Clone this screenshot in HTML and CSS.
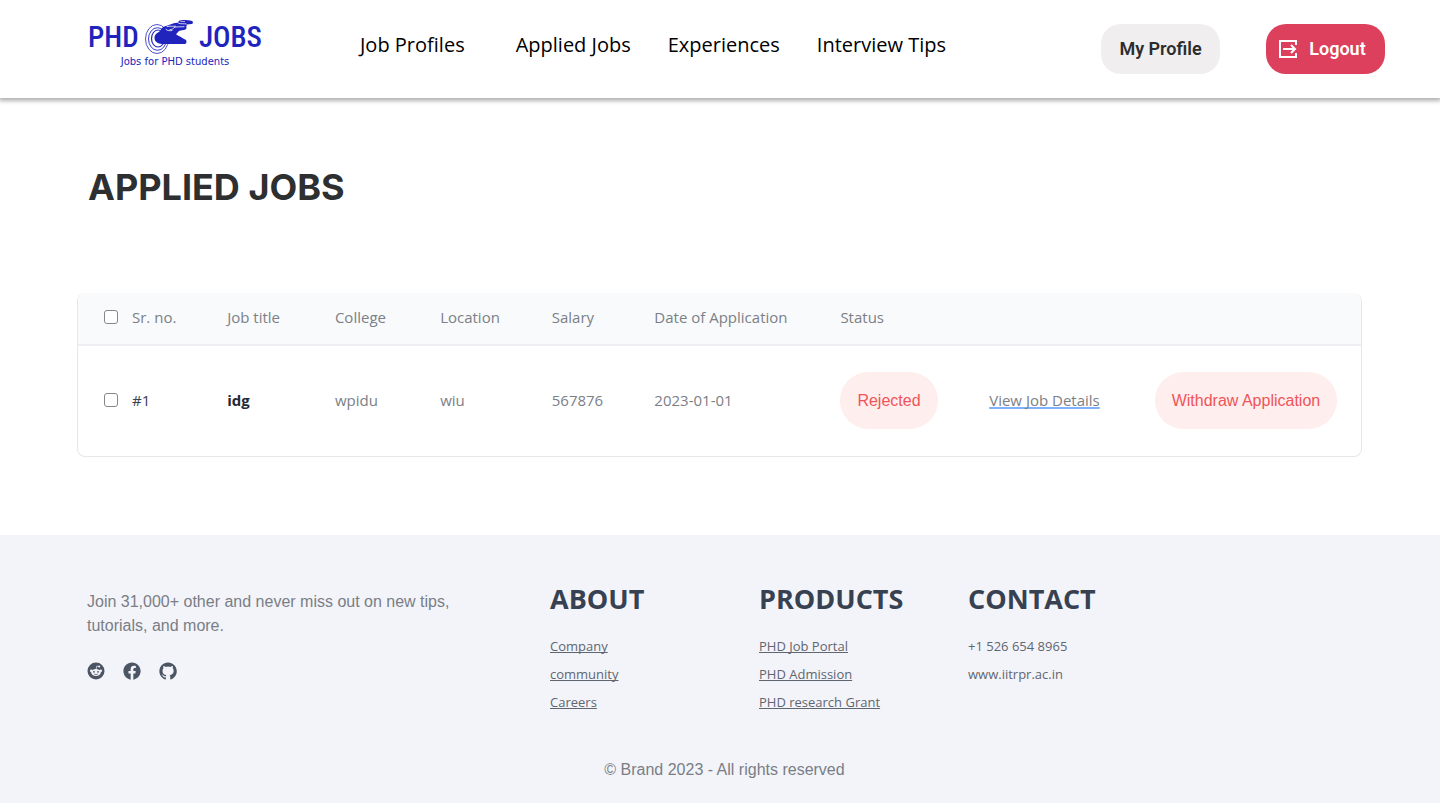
FILE: index.html
```html
<!DOCTYPE html>
<html lang="en">
<head>
<meta charset="utf-8">
<meta name="viewport" content="width=device-width, initial-scale=1">
<title>Applied Jobs</title>
<link rel="stylesheet" href="styles.css">
</head>
<body>
<header class="header">
  <a class="logo" href="#">
    <span class="logo-row">
      <span>PHD</span>
      <svg class="logo-hand" viewBox="5 6 50 38" aria-hidden="true">
        <g fill="none" stroke="#2024bd">
          <ellipse cx="18" cy="27" rx="11.5" ry="14.5" stroke-width=".8"/>
          <ellipse cx="18.500" cy="27" rx="9" ry="11.300" stroke-width=".9"/>
          <ellipse cx="19" cy="26.500" rx="6.500" ry="8.500" stroke-width="1.200"/>
        </g>
        <path fill="#2024bd" d="M15.500 26c0-4 3-5 5.500-7 1.500-2.500 2.500-4.500 6-5l7-2.500c1.500-.5 3-1 5-.7l1-2c1-.8 3-.8 4.500-.8 3 .2 6 0 8.500 1 1.500.8 1.200 2.500-.2 2.900-1.800.4-3.500.2-5.300.5.500.8.300 1.900-.5 2.300 1 .6.600 2.500-.6 2.900-2 .8-4.400.7-6.400 1.500l-3 3.100c2 1.300 6.500 3.500 10 5.900 1 1.500.5 3.900-1 3.900H23c-4-.2-7.500-2.200-7.500-6z"/>
        <g fill="none" stroke="#fff" stroke-width=".8" stroke-linecap="round">
          <path d="M39.500 11.200c2.500 1 5 .3 7.500.7M28 14.500c3-.8 5.500.2 8.500-.3M31 17.500c2.500 0 3.500-.8 4-2 2-1 6-.5 10-.8M27 17.500c1.500 1.300 4 1.500 6 1M41 8.800c1.500.8 3 .6 4.500.7"/>
        </g>
      </svg>
      <span>JOBS</span>
    </span>
    <span class="logo-tagline">Jobs for PHD students</span>
  </a>
  <nav class="nav">
    <a class="nav-first" href="#">Job Profiles</a>
    <a href="#">Applied Jobs</a>
    <a href="#">Experiences</a>
    <a href="#">Interview Tips</a>
  </nav>
  <div class="actions">
    <button class="btn btn-profile" type="button">My Profile</button>
    <button class="btn btn-logout" type="button">
      <svg class="logout-icon" viewBox="0 0 18 18" fill="none" stroke="#fff" stroke-width="2" aria-hidden="true">
        <path d="M17 5V1H1v16h16v-4M4 9h12M12 5l4 4-4 4"/>
      </svg>
      Logout
    </button>
  </div>
</header>

<main class="main">
  <h1 class="title">APPLIED JOBS</h1>
  <div class="card">
    <table class="jobs">
      <colgroup>
        <col class="c-no"><col class="c-title"><col class="c-college"><col class="c-location"><col class="c-salary"><col class="c-date"><col class="c-status"><col class="c-view"><col class="c-withdraw">
      </colgroup>
      <thead>
        <tr>
          <th><label class="check"><input type="checkbox">Sr. no.</label></th>
          <th>Job title</th>
          <th>College</th>
          <th>Location</th>
          <th>Salary</th>
          <th>Date of Application</th>
          <th>Status</th>
          <th></th>
          <th></th>
        </tr>
      </thead>
      <tbody>
        <tr>
          <td><label class="check check-dark"><input type="checkbox">#1</label></td>
          <td class="job-name">idg</td>
          <td>wpidu</td>
          <td>wiu</td>
          <td>567876</td>
          <td>2023-01-01</td>
          <td><span class="pill">Rejected</span></td>
          <td><a class="details" href="#">View Job Details</a></td>
          <td><button class="pill" type="button">Withdraw Application</button></td>
        </tr>
      </tbody>
    </table>
  </div>
</main>

<footer class="footer">
  <div class="footer-grid">
    <div class="join">
      <p>Join 31,000+ other and never miss out on new tips, tutorials, and more.</p>
      <div class="social">
        <a href="#" aria-label="Reddit">
          <svg viewBox="0 0 18 18" aria-hidden="true">
            <circle cx="9" cy="9" r="8.500" fill="#4b5563"/>
            <g fill="#f3f4fa"><ellipse cx="9" cy="10.500" rx="4.800" ry="3.400"/><circle cx="4.200" cy="8.700" r="1.300"/><circle cx="13.800" cy="8.700" r="1.300"/><circle cx="12.200" cy="4.500" r="1"/></g>
            <path d="M9 7.500l.8-3.400 2.200.5" fill="none" stroke="#f3f4fa" stroke-width=".7"/>
            <circle cx="7" cy="9.800" r=".9" fill="#4b5563"/><circle cx="11" cy="9.800" r=".9" fill="#4b5563"/>
            <path d="M7 12c1.200.8 2.800.8 4 0" fill="none" stroke="#4b5563" stroke-width=".7"/>
          </svg>
        </a>
        <a href="#" aria-label="Facebook">
          <svg viewBox="0 0 24 24" fill="#4b5563" aria-hidden="true"><path d="M23.500 12.070C23.500 5.700 18.350.5 12 .5S.5 5.700.5 12.070c0 5.770 4.200 10.560 9.700 11.430v-8.090H7.280v-3.340h2.920V9.520c0-2.900 1.720-4.500 4.350-4.500 1.260 0 2.570.23 2.570.23v2.850h-1.450c-1.430 0-1.870.89-1.870 1.800v2.170h3.190l-.51 3.340H13.800v8.090c5.500-.87 9.700-5.660 9.700-11.430z"/></svg>
        </a>
        <a href="#" aria-label="GitHub">
          <svg viewBox="0 0 24 24" fill="#4b5563" aria-hidden="true"><path d="M12 .6C5.600.6.5 5.800.5 12.200c0 5.100 3.300 9.400 7.900 11 .6.100.8-.3.8-.6v-2.200c-3.200.7-3.900-1.400-3.900-1.400-.5-1.300-1.300-1.700-1.300-1.700-1-.7.1-.7.1-.7 1.200.1 1.800 1.200 1.800 1.200 1 1.800 2.700 1.300 3.300 1 .1-.8.4-1.300.7-1.600-2.500-.3-5.200-1.300-5.200-5.700 0-1.300.5-2.300 1.200-3.100-.1-.3-.5-1.500.1-3.100 0 0 1-.3 3.200 1.200a11 11 0 0 1 5.800 0c2.200-1.500 3.200-1.200 3.200-1.200.6 1.600.2 2.800.1 3.100.7.800 1.200 1.800 1.200 3.100 0 4.500-2.700 5.400-5.300 5.700.4.400.8 1.100.8 2.200v3.200c0 .3.200.7.800.6 4.600-1.600 7.900-5.900 7.900-11C23.500 5.800 18.400.6 12 .6z"/></svg>
        </a>
      </div>
    </div>
    <section class="links">
      <h2>ABOUT</h2>
      <ul>
        <li><a href="#">Company</a></li>
        <li><a href="#">community</a></li>
        <li><a href="#">Careers</a></li>
      </ul>
    </section>
    <section class="links">
      <h2>PRODUCTS</h2>
      <ul>
        <li><a href="#">PHD Job Portal</a></li>
        <li><a href="#">PHD Admission</a></li>
        <li><a href="#">PHD research Grant</a></li>
      </ul>
    </section>
    <section class="links">
      <h2>CONTACT</h2>
      <ul>
        <li>+1 526 654 8965</li>
        <li>www.iitrpr.ac.in</li>
      </ul>
    </section>
  </div>
  <p class="copyright">© Brand 2023 - All rights reserved</p>
</footer>
</body>
</html>
```
FILE: styles.css
```css
* { box-sizing: border-box; }

body {
  margin: 0;
  min-height: 100vh;
  display: flex;
  flex-direction: column;
  background: #fff;
  font-family: "Open Sans", "Noto Sans", sans-serif;
}

h1, h2, p, ul { margin: 0; padding: 0; }
ul { list-style: none; }
button { border: 0; font: inherit; cursor: pointer; }

.header {
  display: flex;
  align-items: center;
  padding: 18px 55px 18px 88px;
  min-height: 98px;
  box-shadow: 0 2px 4px 1px rgba(0, 0, 0, 0.3);
}

.logo {
  display: flex;
  flex-direction: column;
  align-items: center;
  width: 174px;
  padding-bottom: 12px;
  color: #2024bd;
  text-decoration: none;
}
.logo-row {
  display: flex;
  justify-content: space-between;
  align-items: center;
  width: 100%;
  font: 500 29px/38px "Roboto Condensed", Roboto, sans-serif;
}
.logo-hand { flex: none; width: 50px; height: 38px; }
.logo-tagline { font: 10px/12px "DejaVu Sans", sans-serif; }

.nav {
  display: flex;
  gap: 37px;
  margin-left: 98px;
  padding-bottom: 8px;
  font-size: 20px;
  line-height: 28px;
}
.nav a { color: #000; text-decoration: none; white-space: nowrap; }
.nav-first { margin-right: 14px; }

.actions { display: flex; gap: 46px; margin-left: auto; }
.btn {
  display: flex;
  align-items: center;
  justify-content: center;
  gap: 12px;
  width: 119px;
  height: 50px;
  padding: 0;
  border-radius: 20px;
  font: 600 18px/24px Roboto, sans-serif;
}
.btn-profile { background: #f1eeef; color: #2b2d2e; }
.btn-logout { background: #dc405c; color: #fff; padding-right: 6px; }
.logout-icon { width: 18px; height: 18px; }

.main { padding: 65px 78px 78px 77px; }
.title {
  margin: 0 0 82px 11px;
  color: #2d2f30;
  font: 700 36px/48px Inter, sans-serif;
}

.card {
  border: 1px solid #e5e7eb;
  border-top: 0;
  border-radius: 8px;
  overflow: hidden;
}
.jobs {
  width: 100%;
  table-layout: fixed;
  border-collapse: collapse;
  color: #7b8087;
  font-size: 15px;
  line-height: 20px;
}
.c-no { width: 9.6%; }
.c-title { width: 8.4%; }
.c-college { width: 8.2%; }
.c-location { width: 8.7%; }
.c-salary { width: 8%; }
.c-date { width: 14.5%; }
.c-status { width: 11.6%; }
.c-view { width: 12.9%; }
.c-withdraw { width: 18.1%; }
.jobs th, .jobs td {
  padding: 0 0 2px 26px;
  text-align: left;
  font-weight: 400;
  white-space: nowrap;
}
.jobs th { height: 52px; padding-bottom: 4px; background: #f9fafc; border-bottom: 2px solid #edeff3; }
.jobs td { height: 111px; }
.jobs .job-name { color: #1f2937; font-weight: 700; }

.check { display: flex; align-items: center; gap: 14px; }
.check-dark { color: #374151; }
.check input {
  appearance: none;
  width: 14px;
  height: 14px;
  margin: 0;
  border: 1px solid #85878a;
  border-radius: 3px;
  background: #fff;
}
.check input:checked { background: #2024bd; }

.pill {
  display: inline-block;
  padding: 18px 17px;
  border-radius: 29px;
  background: #feeeee;
  color: #f05458;
  font: 16px/21px "Liberation Sans", sans-serif;
}
.details {
  color: inherit;
  text-decoration: underline 2px #80b2fc;
  text-decoration-skip-ink: none;
  text-underline-offset: 1px;
}

.footer {
  flex: 1;
  padding: 46px 78px 20px 87px;
  background: #f3f4fa;
}
.footer-grid { display: grid; grid-template-columns: 463fr 209fr 209fr 394fr; }
.join { padding-top: 9px; color: #797e85; font: 16px/24px "Liberation Sans", sans-serif; }
.join p { max-width: 380px; }
.social { display: flex; gap: 18px; margin-top: 24px; }
.social a { display: block; height: 18px; }
.social svg { display: block; width: 18px; height: 18px; }

.links h2 { margin-bottom: 19px; color: #374151; font-size: 27px; line-height: 36px; }
.links ul { display: grid; gap: 8px; color: #5f6670; font-size: 13px; line-height: 20px; }
.links a { color: inherit; text-decoration-skip-ink: none; text-underline-offset: 1px; }

.copyright {
  margin-top: 46px;
  color: #797e85;
  text-align: center;
  font: 16px/24px "Liberation Sans", sans-serif;
}
```
